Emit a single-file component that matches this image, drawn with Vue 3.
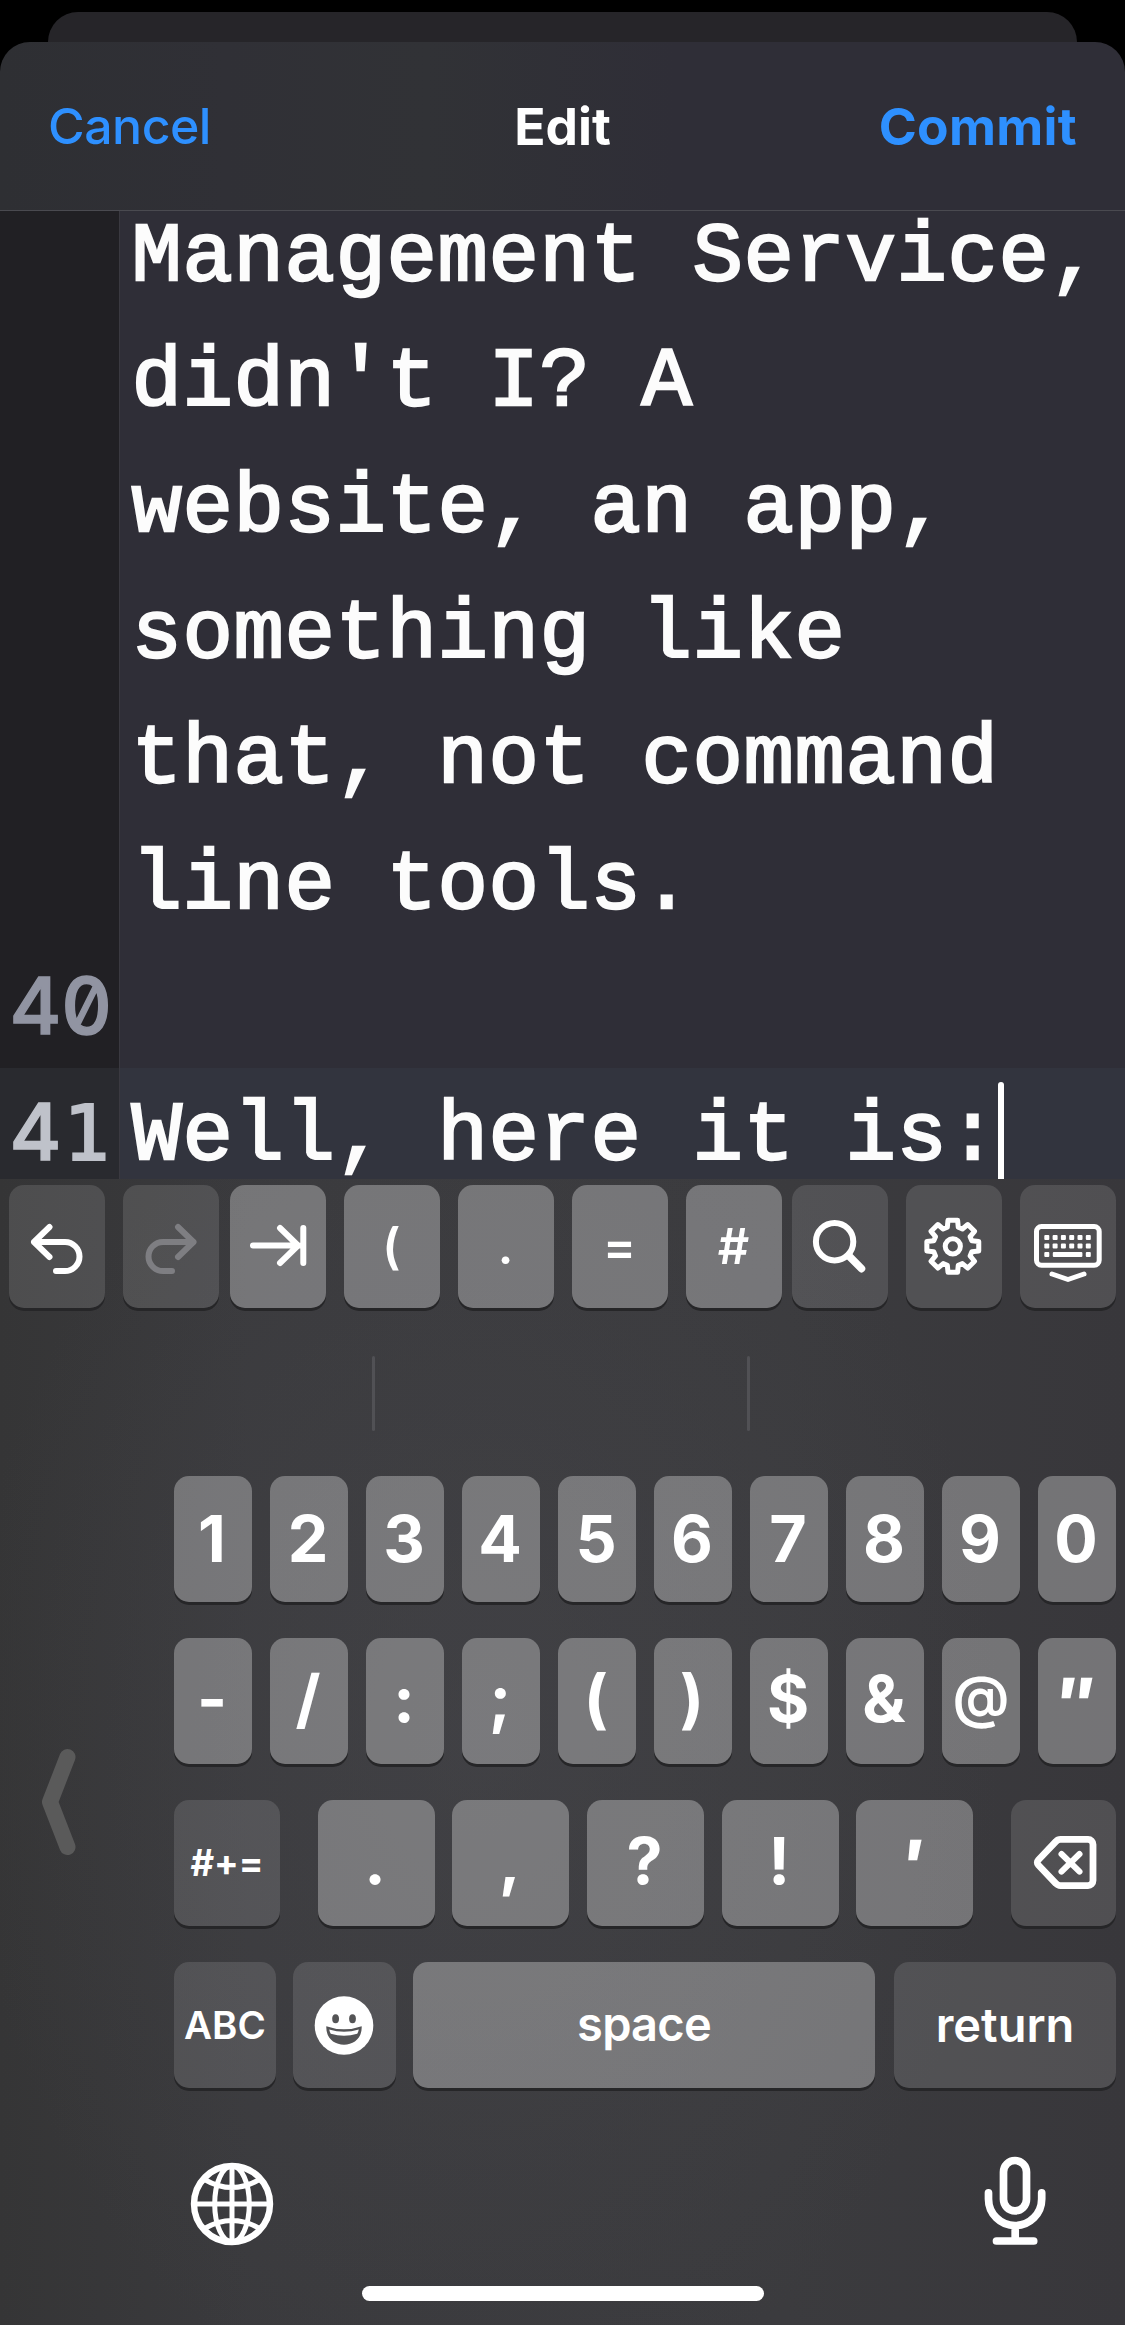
<script setup>
const lines = [
  { no: '', text: 'Management Service,' },
  { no: '', text: "didn't I? A" },
  { no: '', text: 'website, an app,' },
  { no: '', text: 'something like' },
  { no: '', text: 'that, not command' },
  { no: '', text: 'line tools.' },
  { no: '40', text: '' },
  { no: '41', text: 'Well, here it is:', active: true },
]

const digits = ['1', '2', '3', '4', '5', '6', '7', '8', '9', '0']
const symbols = ['-', '/', ':', ';', '(', ')', '$', '&', '@', '″']
const marks = ['.', ',', '?', '!', '′']

// Outline of the eight-toothed settings gear, centred on (cx, cy)
function gearPath(cx, cy) {
  const points = []
  for (let i = 0; i < 8; i++) {
    const base = i * 45 - 90
    for (const [angle, r] of [[-16, 19.8], [-10.5, 26.4], [10.5, 26.4], [16, 19.8]]) {
      const a = ((base + angle) * Math.PI) / 180
      points.push(`${(cx + r * Math.cos(a)).toFixed(2)} ${(cy + r * Math.sin(a)).toFixed(2)}`)
    }
  }
  return `M${points.join('L')}Z`
}
const gear = gearPath(46.8, 61.3)
const keyCols = [26.8, 35.1, 43.4, 51.7, 60, 68.3]
</script>

<template>
  <div class="phone">
    <div class="backdrop"><div class="back-sheet"></div></div>
    <header class="nav">
      <span class="cancel">Cancel</span>
      <span class="title">Edit</span>
      <span class="commit">Commit</span>
    </header>

    <main class="editor">
      <div class="lines">
        <div v-for="(l, i) in lines" :key="i" class="line" :class="{ active: l.active }">
          <span class="num"><b v-for="d in l.no" :key="d" :class="{ slab: d === '1' }">{{ d }}</b></span>
          <span class="code">{{ l.text }}<i v-if="l.active" class="caret"></i></span>
        </div>
      </div>
    </main>

    <section class="keyboard">
      <div class="toolbar">
        <div class="group">
          <div class="key dark">
            <svg width="96" height="123" class="stroke"><path d="M40.5 42L25 57L40.5 72M25 57H56a14.5 14.5 0 0 1 0 29H47" /></svg>
          </div>
          <div class="key dark faded">
            <svg width="96" height="123" class="stroke"><path d="M55 42L70.5 57L55 72M70.5 57H40a14.5 14.5 0 0 0 0 29H49" /></svg>
          </div>
        </div>
        <div class="group">
          <div class="key">
            <svg width="96" height="123" class="stroke"><path d="M23 60.5H69M50 43L68 60.5L50 78M73.3 43V78" /></svg>
          </div>
          <div class="key"><span>(</span></div>
          <div class="key"><span>.</span></div>
          <div class="key"><span>=</span></div>
          <div class="key"><span>#</span></div>
        </div>
        <div class="group">
          <div class="key dark">
            <svg width="96" height="123" class="stroke"><circle cx="42.6" cy="56.7" r="18.7" /><path d="M57 71L69.5 83.7" stroke-width="7.5" /></svg>
          </div>
          <div class="key dark">
            <svg width="96" height="123" class="stroke thin"><path :d="gear" /><circle cx="46.8" cy="61.3" r="7.6" /></svg>
          </div>
          <div class="key dark">
            <svg width="96" height="123" class="stroke thin">
              <rect x="16.5" y="41.5" width="62.7" height="38.7" rx="5" />
              <g class="solid">
                <template v-for="x in keyCols" :key="x">
                  <rect :x="x - 2.5" y="49.9" width="5" height="5" rx="1" />
                  <rect :x="x - 2.5" y="58.5" width="5" height="5" rx="1" />
                </template>
                <rect x="24.3" y="66.9" width="5" height="5" rx="1" />
                <rect x="32.8" y="66.9" width="29.6" height="5" rx="1" />
                <rect x="65.8" y="66.9" width="5" height="5" rx="1" />
              </g>
              <path d="M32 89L48 94.5L64 89" />
            </svg>
          </div>
        </div>
      </div>

      <div class="suggestions"><i></i><i></i></div>

      <div class="board">
        <div class="side">
          <svg width="40" height="112"><path d="M29.5 11L12 56L29.5 101" /></svg>
        </div>
        <div class="rows">
          <div class="row even">
            <div v-for="k in digits" :key="k" class="key char"><span>{{ k }}</span></div>
          </div>
          <div class="row even raised">
            <div v-for="k in symbols" :key="k" class="key char" :class="{ at: k === '@', prime: k === '″' }"><span>{{ k }}</span></div>
          </div>
          <div class="row spread raised">
            <div class="key dark shift"><span>#+=</span></div>
            <div class="marks">
              <div v-for="k in marks" :key="k" class="key char" :class="{ prime: k === '′' }"><span>{{ k }}</span></div>
            </div>
            <div class="key dark delete">
              <svg width="105" height="126" class="stroke">
                <path class="outline" d="M49.5 39.4H77a5 5 0 0 1 5 5V80.6a5 5 0 0 1-5 5H49.5a6 6 0 0 1-4.5-2L27.3 65a3.6 3.6 0 0 1 0-5L45 41.4a6 6 0 0 1 4.5-2Z" />
                <path d="M50.5 54L68.5 71.6M68.5 54L50.5 71.6" />
              </svg>
            </div>
          </div>
          <div class="row last">
            <div class="key dark abc"><span>ABC</span></div>
            <div class="key dark emoji">
              <svg width="103" height="126">
                <circle cx="51" cy="63.5" r="29.3" fill="#fff" />
                <g fill="#545456">
                  <ellipse cx="42.6" cy="56.7" rx="3.4" ry="4.5" />
                  <ellipse cx="59.5" cy="56.7" rx="3.4" ry="4.5" />
                  <path d="M33.3 64.2Q51 70.5 68.7 64.2C69.2 76 61 82.7 51 82.7S32.8 76 33.3 64.2Z" />
                </g>
                <path d="M36.2 67.4Q51 72.3 65.8 67.4Q65.3 70 64.2 71.7Q51 75.6 37.8 71.7Q36.7 70 36.2 67.4Z" fill="#fff" />
              </svg>
            </div>
            <div class="key space"><span>space</span></div>
            <div class="key dark return"><span>return</span></div>
          </div>
        </div>
      </div>

      <div class="dock">
        <svg width="84" height="84" viewBox="-42 -42 84 84" class="globe">
          <circle r="38" stroke-width="6.4" />
          <path d="M0 -38V38M-38 0H38M-27.5 -24.5Q0 -8.4 27.5 -24.5M-27.5 24.5Q0 8.4 27.5 24.5" />
          <ellipse rx="17.3" ry="38" />
        </svg>
        <svg width="64" height="92" class="mic">
          <rect x="20.5" y="5.5" width="23" height="50.3" rx="11.5" />
          <path d="M5.500 37.800V44a26.600 26.600 0 0 0 53.200 0V37.800M32.200 71V86M13.500 86H50.700" />
        </svg>
      </div>
      <div class="home"></div>
    </section>
  </div>
</template>

<style>
body {
  margin: 0;
  background: #000;
}
</style>

<style scoped>
.phone {
  width: 1125px;
  height: 2325px;
  overflow: hidden;
  display: flex;
  flex-direction: column;
  background: #000;
  color: #fff;
  font-family: Inter, "Liberation Sans", sans-serif;
}
.backdrop {
  height: 42px;
  padding: 12px 48px 0;
  box-sizing: border-box;
}
.back-sheet {
  height: 30px;
  border-radius: 30px 30px 0 0;
  background: #262529;
}
.nav {
  height: 168px;
  flex: none;
  display: grid;
  grid-template-columns: 1fr auto 1fr;
  align-items: center;
  padding: 0 48px;
  border-radius: 30px 30px 0 0;
  border-bottom: 1px solid #4a4a50;
  background: linear-gradient(90deg, #2e2f33 0, #303036 20%, #313236 38%, #2f2e37 60%);
  font-size: 50px;
}
.cancel {
  color: #2e90ff;
  font-weight: 500;
  letter-spacing: -0.5px;
}
.title {
  font-weight: 700;
  font-size: 51.5px;
}
.commit {
  color: #2e90ff;
  font-weight: 700;
  font-size: 51.5px;
  letter-spacing: 0.3px;
  justify-self: end;
}
.editor {
  height: 968px;
  flex: none;
  overflow: hidden;
  background: #2f2e37;
}
.lines {
  margin-top: -22.2px;
}
.line {
  height: 125.6px;
  display: flex;
  font: 84px/109.6px "Liberation Mono", monospace;
  letter-spacing: 0.59px;
  white-space: pre;
  -webkit-text-stroke: 2.4px currentColor;
  color: #fcfcfc;
}
.num {
  width: 119px;
  flex: none;
  box-sizing: border-box;
  display: flex;
  padding: 14px 0 0 10px;
  background: #212024;
  color: #9194a2;
}
.num b {
  width: 51px;
  text-align: center;
  font: 500 79px/99px Inter, sans-serif;
  letter-spacing: 0;
  font-feature-settings: "tnum", "zero";
  -webkit-text-stroke: 1.4px currentColor;
}
.num .slab {
  font: 400 77px/104px "DejaVu Sans Mono", monospace;
  -webkit-text-stroke: 2.2px currentColor;
}
.code {
  flex: 1;
  display: flex;
  padding: 14px 0 0 11.5px;
  border-left: 1px solid #3a3940;
}
.active {
  background: #32343e;
}
.active .num {
  background: #292a2f;
  color: #bfc2ca;
}
.caret {
  width: 6px;
  height: 120px;
  border-radius: 3px;
  background: #fff;
}
.keyboard {
  flex: 1;
  display: flex;
  flex-direction: column;
  background:
    radial-gradient(ellipse 520px 700px at 480px 560px, rgba(72, 72, 77, 0.45), rgba(72, 72, 77, 0)),
    linear-gradient(90deg, #353536 0, #3a3a3d 22%, #3b3b3e 70%, #38373b 100%);
}
.toolbar {
  display: flex;
  justify-content: space-between;
  padding: 6px 9px 0;
}
.group {
  display: flex;
  gap: 18px;
}
.key {
  display: flex;
  align-items: center;
  justify-content: center;
  border-radius: 15px;
  background: rgba(255, 255, 255, 0.3);
  box-shadow: 0 3px 0 #262628;
  color: #fff;
}
.key.dark {
  background: rgba(255, 255, 255, 0.12);
}
.key svg {
  flex: none;
}
.toolbar .key {
  width: 96px;
  height: 123px;
  font-size: 49px;
  font-weight: 600;
}
.stroke {
  fill: none;
  stroke: #fff;
  stroke-width: 6px;
  stroke-linecap: round;
  stroke-linejoin: round;
}
.outline {
  stroke-width: 6.8px;
}
.thin {
  stroke-width: 5px;
}
.solid {
  fill: #fff;
  stroke: none;
}
.faded .stroke {
  stroke: #7e7e82;
}
.suggestions {
  height: 75px;
  margin-top: 48px;
  padding-right: 3px;
  display: flex;
  justify-content: center;
  gap: 372px;
}
.suggestions i {
  width: 3px;
  border-radius: 2px;
  background: #515155;
}
.board {
  display: flex;
  margin-top: 45px;
}
.side {
  width: 174px;
  padding: 270px 0 0 38px;
  box-sizing: border-box;
}
.side svg {
  fill: none;
  stroke: #5a5a5a;
  stroke-width: 16px;
  stroke-linecap: round;
  stroke-linejoin: round;
}
.rows {
  width: 942px;
  display: flex;
  flex-direction: column;
  gap: 36px;
}
.row {
  display: flex;
  height: 126px;
}
.even {
  gap: 18px;
}
.even .key {
  width: 78px;
}
.char {
  font-size: 64.5px;
  font-weight: 700;
}
.char span {
  padding-right: 2px;
}
.raised .char span {
  padding-bottom: 4px;
}
.raised .at span {
  font-size: 57px;
  font-weight: 600;
  padding: 0 0 9px;
}
.raised .prime span {
  padding: 4px 0 0;
  -webkit-text-stroke: 2.5px currentColor;
}
.spread {
  justify-content: space-between;
}
.marks {
  display: flex;
  gap: 17.5px;
}
.marks .key {
  width: 117.2px;
}
.shift {
  width: 106px;
  font-size: 36.5px;
  font-weight: 700;
}
.delete {
  width: 105px;
}
.last {
  font-weight: 600;
  font-size: 46px;
}
.abc {
  width: 102px;
  margin-right: 17px;
  font-size: 38.5px;
}
.emoji {
  width: 103px;
  margin-right: 17px;
}
.space {
  width: 462px;
  margin-right: 19px;
  letter-spacing: -0.8px;
  font-size: 47px;
}
.space span {
  padding-bottom: 4px;
}
.return {
  width: 222px;
  font-size: 47px;
}
.return span {
  padding-bottom: 2px;
}
.dock {
  display: flex;
  justify-content: space-between;
  align-items: flex-start;
  padding: 67px 78px 0 190px;
}
.dock svg {
  fill: none;
  stroke: #fff;
  stroke-linecap: round;
}
.globe {
  margin-top: 7px;
  stroke-width: 5px;
}
.mic {
  stroke-width: 7.7px;
}
.home {
  width: 402px;
  height: 15px;
  margin: 39px auto 0;
  border-radius: 8px;
  background: #fff;
}
</style>
